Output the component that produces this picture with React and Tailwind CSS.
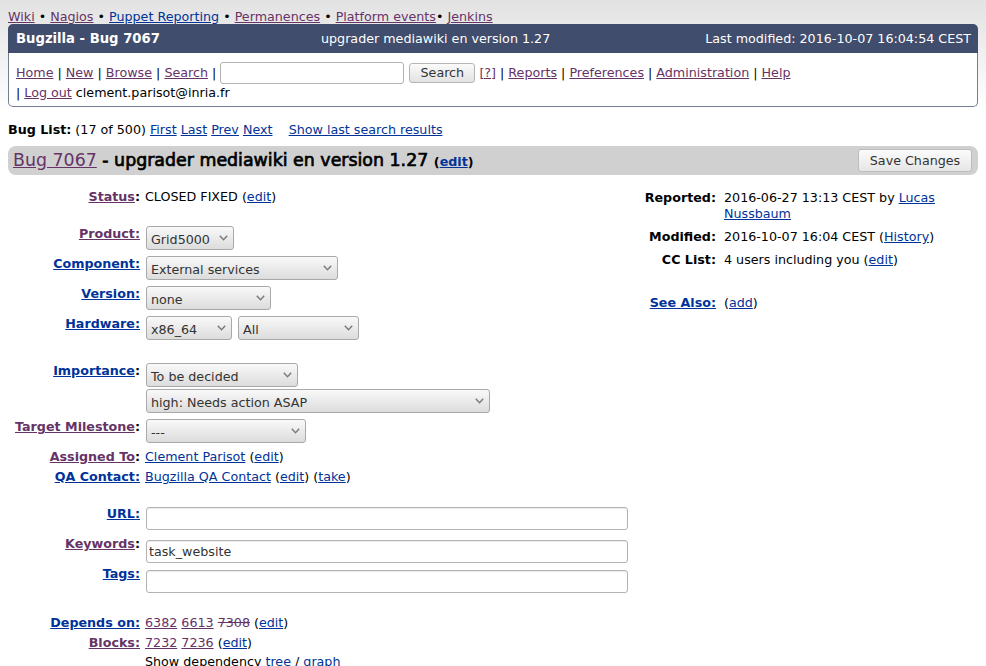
import React from "react";

const PU = "text-[#663366] underline";
const BL = "text-[#003399] underline";

function Chevron() {
  return (
    <svg width="9" height="6" viewBox="0 0 9 6" className="shrink-0">
      <polyline points="0.8,0.8 4.5,4.8 8.2,0.8" fill="none" stroke="#7a7a7a" strokeWidth="1.4" />
    </svg>
  );
}

function Sel({ w, children }) {
  return (
    <div
      className={`${w} h-[24px] rounded-[3px] border border-[#a9a9a9] bg-[linear-gradient(#f9f9f9,#dcdcdc)] flex items-center justify-between pl-[4px] pr-[5px] text-[#333] leading-[16px]`}
    >
      <span className="pt-[3px]">{children}</span>
      <Chevron />
    </div>
  );
}

function Row({ label, top, children }) {
  return (
    <div className={`flex items-start ${top}`}>
      <div className="w-[132px] shrink-0 text-right font-bold leading-[16px] whitespace-nowrap">{label}</div>
      <div className="ml-[5px] leading-[16px]">{children}</div>
    </div>
  );
}

function TextInput({ value, mt }) {
  return (
    <div
      className={`${mt} ml-px w-[482px] h-[23px] rounded-[3px] border border-[#b3b3b3] bg-white shadow-[inset_0_1px_1px_rgba(0,0,0,0.08)] pl-[2px] flex items-center text-[#333]`}
    >
      {value}
    </div>
  );
}

export default function App() {
  return (
    <div
      className="min-h-[666px] bg-[linear-gradient(#e2e2e2,#ffffff_110px)] px-2 pt-[8px] text-[12.7px] text-black"
      style={{ fontFamily: '"DejaVu Sans", Verdana, sans-serif' }}
    >
      {/* top nav */}
      <div className="h-[16px] leading-[18px] whitespace-nowrap">
        <a className={PU}>Wiki</a> • <a className={PU}>Nagios</a> •{" "}
        <a className={BL}>Puppet Reporting</a> • <a className={PU}>Permanences</a> •{" "}
        <a className={PU}>Platform events</a>• <a className={PU}>Jenkins</a>
      </div>

      {/* header */}
      <div className="h-[29px] bg-[#404d6c] rounded-t-[5px] flex items-center text-white whitespace-nowrap">
        <div className="w-[313px] pl-[8px] font-bold text-[13.2px]">Bugzilla - Bug 7067</div>
        <div>upgrader mediawiki en version 1.27</div>
        <div className="flex-1" />
        <div className="pr-[7px]">Last modified: 2016-10-07 16:04:54 CEST</div>
      </div>
      <div className="border border-t-0 border-[#747e93] rounded-b-[5px] bg-white pl-[7px] pt-[8px] pb-[4px]">
        <div className="h-[23px] flex items-center whitespace-pre">
          <a className={PU}>Home</a>
          <span> | </span>
          <a className={PU}>New</a>
          <span> | </span>
          <a className={PU}>Browse</a>
          <span> | </span>
          <a className={PU}>Search</a>
          <span> | </span>
          <div className="w-[184px] h-[22px] rounded-[3px] border border-[#b3b3b3] bg-white" />
          <div className="ml-[5px] w-[66px] h-[20px] rounded-[3px] border border-[#b5b5b5] bg-[linear-gradient(#fbfbfb,#e2e2e2)] flex items-center justify-center text-[#333]">
            Search
          </div>
          <span> </span>
          <a className={PU}>[?]</a>
          <span> | </span>
          <a className={PU}>Reports</a>
          <span> | </span>
          <a className={PU}>Preferences</a>
          <span> | </span>
          <a className={PU}>Administration</a>
          <span> | </span>
          <a className={PU}>Help</a>
        </div>
        <div className="leading-[18px] whitespace-pre">
          <span>| </span>
          <a className={PU}>Log out</a>
          <span> clement.parisot@inria.fr</span>
        </div>
      </div>

      {/* bug list */}
      <div className="mt-[15px] leading-[16px] whitespace-pre">
        <b>Bug List:</b> (17 of 500) <a className={BL}>First</a> <a className={BL}>Last</a>{" "}
        <a className={BL}>Prev</a> <a className={BL}>Next</a>
        {"    "}
        <a className={BL}>Show last search results</a>
      </div>

      {/* title bar */}
      <div className="mt-[8px] h-[29px] bg-[#d0d0d0] rounded-[8px] flex items-center justify-between pl-[5px] pr-[6px]">
        <div className="whitespace-pre text-[17.4px] leading-[20px] pt-[1px]">
          <a className={PU}>Bug 7067</a>
          <span className="[-webkit-text-stroke:0.7px_black]"> - upgrader mediawiki en version 1.27 </span>
          <b className="text-[12.7px]">
            (<a className={BL}>edit</a>)
          </b>
        </div>
        <div className="w-[114px] h-[23px] rounded-[3px] border border-[#bdbdbd] bg-[linear-gradient(#fbfbfb,#e6e6e6)] flex items-center justify-center text-[#333]">
          Save Changes
        </div>
      </div>

      {/* main */}
      <div className="flex">
        <div className="w-[632px] shrink-0">
          <Row
            top="mt-[14px]"
            label={
              <>
                <a className={PU}>Status</a>:
              </>
            }
          >
            CLOSED FIXED (<a className={BL}>edit</a>)
          </Row>
          <Row top="mt-[21px]" label={<a className={PU}>Product:</a>}>
            <div className="ml-px">
              <Sel w="w-[88px]">Grid5000</Sel>
            </div>
          </Row>
          <Row top="mt-[6px]" label={<a className={BL}>Component:</a>}>
            <div className="ml-px">
              <Sel w="w-[192px]">External services</Sel>
            </div>
          </Row>
          <Row top="mt-[6px]" label={<a className={BL}>Version:</a>}>
            <div className="ml-px">
              <Sel w="w-[125px]">none</Sel>
            </div>
          </Row>
          <Row top="mt-[6px]" label={<a className={BL}>Hardware:</a>}>
            <div className="ml-px flex gap-[6px]">
              <Sel w="w-[86px]">x86_64</Sel>
              <Sel w="w-[121px]">All</Sel>
            </div>
          </Row>
          <Row
            top="mt-[23px]"
            label={
              <>
                <a className={BL}>Importance</a>:
              </>
            }
          >
            <div className="ml-px flex flex-col gap-[2px]">
              <Sel w="w-[152px]">To be decided</Sel>
              <Sel w="w-[344px]">high: Needs action ASAP</Sel>
            </div>
          </Row>
          <Row
            top="mt-[6px]"
            label={
              <>
                <a className={PU}>Target Milestone</a>:
              </>
            }
          >
            <div className="ml-px">
              <Sel w="w-[160px]">---</Sel>
            </div>
          </Row>
          <Row
            top="mt-[6px]"
            label={
              <>
                <a className={PU}>Assigned To</a>:
              </>
            }
          >
            <a className={BL}>Clement Parisot</a> (<a className={BL}>edit</a>)
          </Row>
          <Row top="mt-[4px]" label={<a className={BL}>QA Contact:</a>}>
            <span className="whitespace-pre">
              <a className={BL}>Bugzilla QA Contact</a> (<a className={BL}>edit</a>) (<a className={BL}>take</a>)
            </span>
          </Row>
          <Row top="mt-[21px]" label={<a className={BL}>URL:</a>}>
            <TextInput mt="mt-px" value="" />
          </Row>
          <Row
            top="mt-[6px]"
            label={
              <>
                <a className={PU}>Keywords</a>:
              </>
            }
          >
            <TextInput mt="mt-[4px]" value="task_website" />
          </Row>
          <Row top="mt-[3px]" label={<a className={BL}>Tags:</a>}>
            <TextInput mt="mt-[4px]" value="" />
          </Row>
          <Row top="mt-[22px]" label={<a className={BL}>Depends on:</a>}>
            <span className="whitespace-pre">
              <a className={PU}>6382</a> <a className={PU}>6613</a>{" "}
              <a className="text-[#663366] line-through">7308</a> (<a className={BL}>edit</a>)
            </span>
          </Row>
          <Row top="mt-[4px]" label={<a className={PU}>Blocks:</a>}>
            <span className="whitespace-pre">
              <a className={PU}>7232</a> <a className={PU}>7236</a> (<a className={BL}>edit</a>)
            </span>
          </Row>
          <Row top="mt-[3px]" label="">
            Show dependency <a className={BL}>tree</a> / <a className={BL}>graph</a>
          </Row>
        </div>

        {/* right column */}
        <div className="flex-1">
          <div className="mt-[15px] flex items-start">
            <div className="w-[76px] shrink-0 text-right font-bold leading-[16px]">Reported:</div>
            <div className="ml-[8px] w-[250px] leading-[16px]">
              2016-06-27 13:13 CEST by <a className={BL}>Lucas Nussbaum</a>
            </div>
          </div>
          <div className="mt-[7px] flex items-start">
            <div className="w-[76px] shrink-0 text-right font-bold leading-[16px]">Modified:</div>
            <div className="ml-[8px] leading-[16px] whitespace-nowrap">
              2016-10-07 16:04 CEST (<a className={BL}>History</a>)
            </div>
          </div>
          <div className="mt-[7px] flex items-start">
            <div className="w-[76px] shrink-0 text-right font-bold leading-[16px]">CC List:</div>
            <div className="ml-[8px] leading-[16px] whitespace-nowrap">
              4 users including you (<a className={BL}>edit</a>)
            </div>
          </div>
          <div className="mt-[27px] flex items-start">
            <div className="w-[76px] shrink-0 text-right font-bold leading-[16px]">
              <a className={BL}>See Also:</a>
            </div>
            <div className="ml-[8px] leading-[16px] whitespace-nowrap">
              (<a className={BL}>add</a>)
            </div>
          </div>
        </div>
      </div>
    </div>
  );
}
